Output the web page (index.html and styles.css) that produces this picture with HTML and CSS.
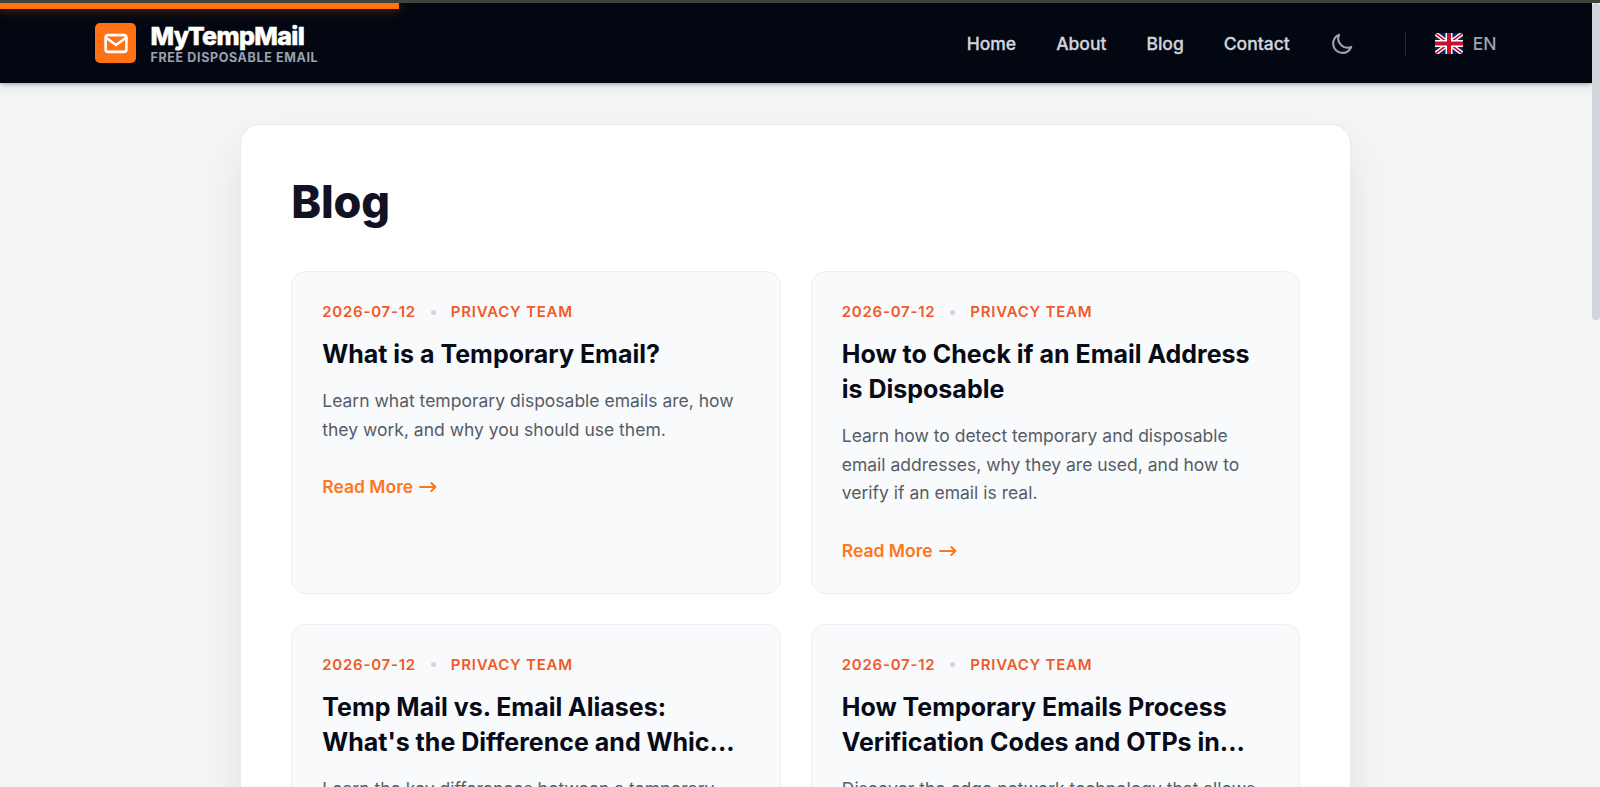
FILE: index.html
```html
<!DOCTYPE html>
<html lang="en">
<head>
  <meta charset="UTF-8">
  <meta name="viewport" content="width=device-width, initial-scale=1.0">
  <title>Blog - MyTempMail</title>
  <link rel="stylesheet" href="styles.css">
</head>
<body>
  <div class="top-strip"></div>
  <div class="viewport">
    <div class="page">
      <header class="header">
        <div class="progress"></div>
        <a class="brand" href="#">
          <span class="brand-icon">
            <svg viewBox="0 0 24 24" fill="none" stroke="currentColor" stroke-width="2.5" stroke-linecap="round" stroke-linejoin="round">
              <rect x="2.5" y="4" width="20" height="16" rx="2.5"/>
              <path d="M3 6.5l9.5 7 9.5-7"/>
            </svg>
          </span>
          <span class="brand-text">
            <span class="brand-name">MyTempMail</span>
            <span class="brand-tagline">FREE DISPOSABLE EMAIL</span>
          </span>
        </a>
        <nav class="nav">
          <a href="#">Home</a>
          <a href="#">About</a>
          <a href="#">Blog</a>
          <a href="#">Contact</a>
          <button class="theme-button" aria-label="Dark mode">
            <svg viewBox="0 0 24 24" fill="none" stroke="currentColor" stroke-width="2" stroke-linecap="round" stroke-linejoin="round">
              <path d="M20.354 15.354A9 9 0 018.646 3.646 9.003 9.003 0 0012 21a9.003 9.003 0 008.354-5.646z"/>
            </svg>
          </button>
          <div class="language">
            <svg class="flag" viewBox="0 0 28 21">
              <rect width="28" height="21" fill="#012169"/>
              <path d="M0 0l28 21M28 0L0 21" stroke="#fff" stroke-width="4.4"/>
              <path d="M0 0l28 21M28 0L0 21" stroke="#c8102e" stroke-width="1.7"/>
              <path d="M14 0v21M0 10.5h28" stroke="#fff" stroke-width="7"/>
              <path d="M14 0v21M0 10.5h28" stroke="#c8102e" stroke-width="4"/>
            </svg>
            <span>EN</span>
          </div>
        </nav>
      </header>

      <main class="container">
        <h1>Blog</h1>
        <div class="posts-grid">
          <article class="post">
            <div class="post-meta"><span>2026-07-12</span><i class="dot"></i><span>PRIVACY TEAM</span></div>
            <h2>What is a Temporary Email?</h2>
            <p>Learn what temporary disposable emails are, how they work, and why you should use them.</p>
            <a class="read-more" href="#">Read More <svg viewBox="0 0 18 12"><path d="M1 6h15.5M12.3 2L16.5 6l-4.2 4"/></svg></a>
          </article>
          <article class="post">
            <div class="post-meta"><span>2026-07-12</span><i class="dot"></i><span>PRIVACY TEAM</span></div>
            <h2>How to Check if an Email Address is Disposable</h2>
            <p>Learn how to detect temporary and disposable email addresses, why they are used, and how to verify if an email is real.</p>
            <a class="read-more" href="#">Read More <svg viewBox="0 0 18 12"><path d="M1 6h15.5M12.3 2L16.5 6l-4.2 4"/></svg></a>
          </article>
          <article class="post">
            <div class="post-meta"><span>2026-07-12</span><i class="dot"></i><span>PRIVACY TEAM</span></div>
            <h2>Temp Mail vs. Email Aliases: What's the Difference and Whic...</h2>
            <p>Learn the key differences between a temporary</p>
          </article>
          <article class="post">
            <div class="post-meta"><span>2026-07-12</span><i class="dot"></i><span>PRIVACY TEAM</span></div>
            <h2>How Temporary Emails Process Verification Codes and OTPs in...</h2>
            <p>Discover the edge network technology that allows</p>
          </article>
        </div>
      </main>
    </div>
    <div class="scrollbar"><div class="scrollbar-thumb"></div></div>
  </div>
</body>
</html>
```
FILE: styles.css
```css
* {
  box-sizing: border-box;
}

body {
  margin: 0;
  height: 787px;
  overflow: hidden;
  font-family: Inter, "Liberation Sans", sans-serif;
  background-color: #f3f4f6;
  color: #070b18;
}

a {
  color: inherit;
  text-decoration: none;
}

.top-strip {
  height: 3.4px;
  background-color: #40423e;
}

.viewport {
  display: flex;
  height: 783.6px;
}

.page {
  flex: 1;
  overflow: hidden;
}

.scrollbar {
  width: 8.5px;
}

.scrollbar-thumb {
  height: 317px;
  border-radius: 5px;
  background-color: #d1d5db;
}

/* Header */
.header {
  position: relative;
  display: flex;
  align-items: center;
  justify-content: space-between;
  height: 79.6px;
  padding: 0 95px;
  background-color: #030712;
  box-shadow: 0 1px 4px rgba(0, 0, 0, 0.3), 0 5px 10px rgba(0, 0, 0, 0.06);
}

.progress {
  position: absolute;
  top: 0;
  left: 0;
  width: 399px;
  height: 5.4px;
  background-color: #ff730d;
  box-shadow: 0 0 12px rgba(249, 115, 22, 0.5);
}

.brand {
  display: flex;
  align-items: center;
  gap: 15px;
}

.brand-icon {
  display: flex;
  align-items: center;
  justify-content: center;
  width: 40.5px;
  height: 40.5px;
  border-radius: 5px;
  background-color: #ff7112;
  color: white;
}

.brand-icon svg {
  width: 25px;
  height: 25px;
}

.brand-text {
  display: flex;
  flex-direction: column;
  padding-top: 4px;
}

.brand-name {
  font-size: 25px;
  line-height: 25px;
  font-weight: 800;
  letter-spacing: -0.63px;
  color: white;
  -webkit-text-stroke: 0.5px white;
}

.brand-tagline {
  font-size: 12.5px;
  line-height: 17px;
  font-weight: 700;
  letter-spacing: 0.63px;
  color: #9ca3af;
}

.nav {
  display: flex;
  align-items: center;
  gap: 40px;
  font-size: 17.5px;
  font-weight: 500;
  color: #d1d5db;
}

.nav a {
  -webkit-text-stroke: 0.3px #d1d5db;
}

.theme-button {
  display: flex;
  padding: 0;
  border: none;
  background: none;
  color: #9ca3af;
}

.theme-button svg {
  width: 25px;
  height: 25px;
}

.language {
  display: flex;
  align-items: center;
  gap: 10px;
  height: 25px;
  margin-left: 10px;
  padding-left: 29px;
  border-left: 1px solid #1f2937;
  font-weight: 500;
  color: #9ca3af;
}

.flag {
  width: 28px;
  height: 21px;
  border-radius: 3px;
}

/* Blog list */
.container {
  width: 1111px;
  height: 900px;
  margin: 41.5px auto 0;
  padding: 50px;
  border: 1px solid #e8eaed;
  border-radius: 20px;
  background-color: white;
  box-shadow: 0 25px 38px rgba(0, 0, 0, 0.08);
}

h1 {
  margin: 0 0 42px;
  font-size: 45px;
  line-height: 54px;
  font-weight: 800;
  letter-spacing: -0.2px;
  color: #111322;
}

.posts-grid {
  display: grid;
  grid-template-columns: 1fr 1fr;
  gap: 30px;
}

.post {
  padding: 30px;
  border: 1px solid #eceef1;
  border-radius: 15px;
  background-color: #f9fafb;
}

.post-meta {
  display: flex;
  align-items: center;
  gap: 15px;
  margin-bottom: 15px;
  font-size: 15px;
  line-height: 20px;
  font-weight: 600;
  letter-spacing: 0.75px;
  color: #f05a28;
}

.dot {
  width: 5px;
  height: 5px;
  border-radius: 50%;
  background-color: #d1d5db;
}

h2 {
  margin: 0 0 15px;
  font-size: 25px;
  line-height: 35px;
  font-weight: 700;
}

.post p {
  margin: 0 0 30px;
  font-size: 17.5px;
  line-height: 28.4px;
  color: #565c66;
}

.read-more {
  display: block;
  font-size: 17.5px;
  line-height: 25px;
  font-weight: 600;
  color: #ff761c;
}

.read-more svg {
  width: 18px;
  height: 12px;
  margin-left: 2px;
  fill: none;
  stroke: currentColor;
  stroke-width: 2;
  stroke-linecap: round;
  stroke-linejoin: round;
}
```
